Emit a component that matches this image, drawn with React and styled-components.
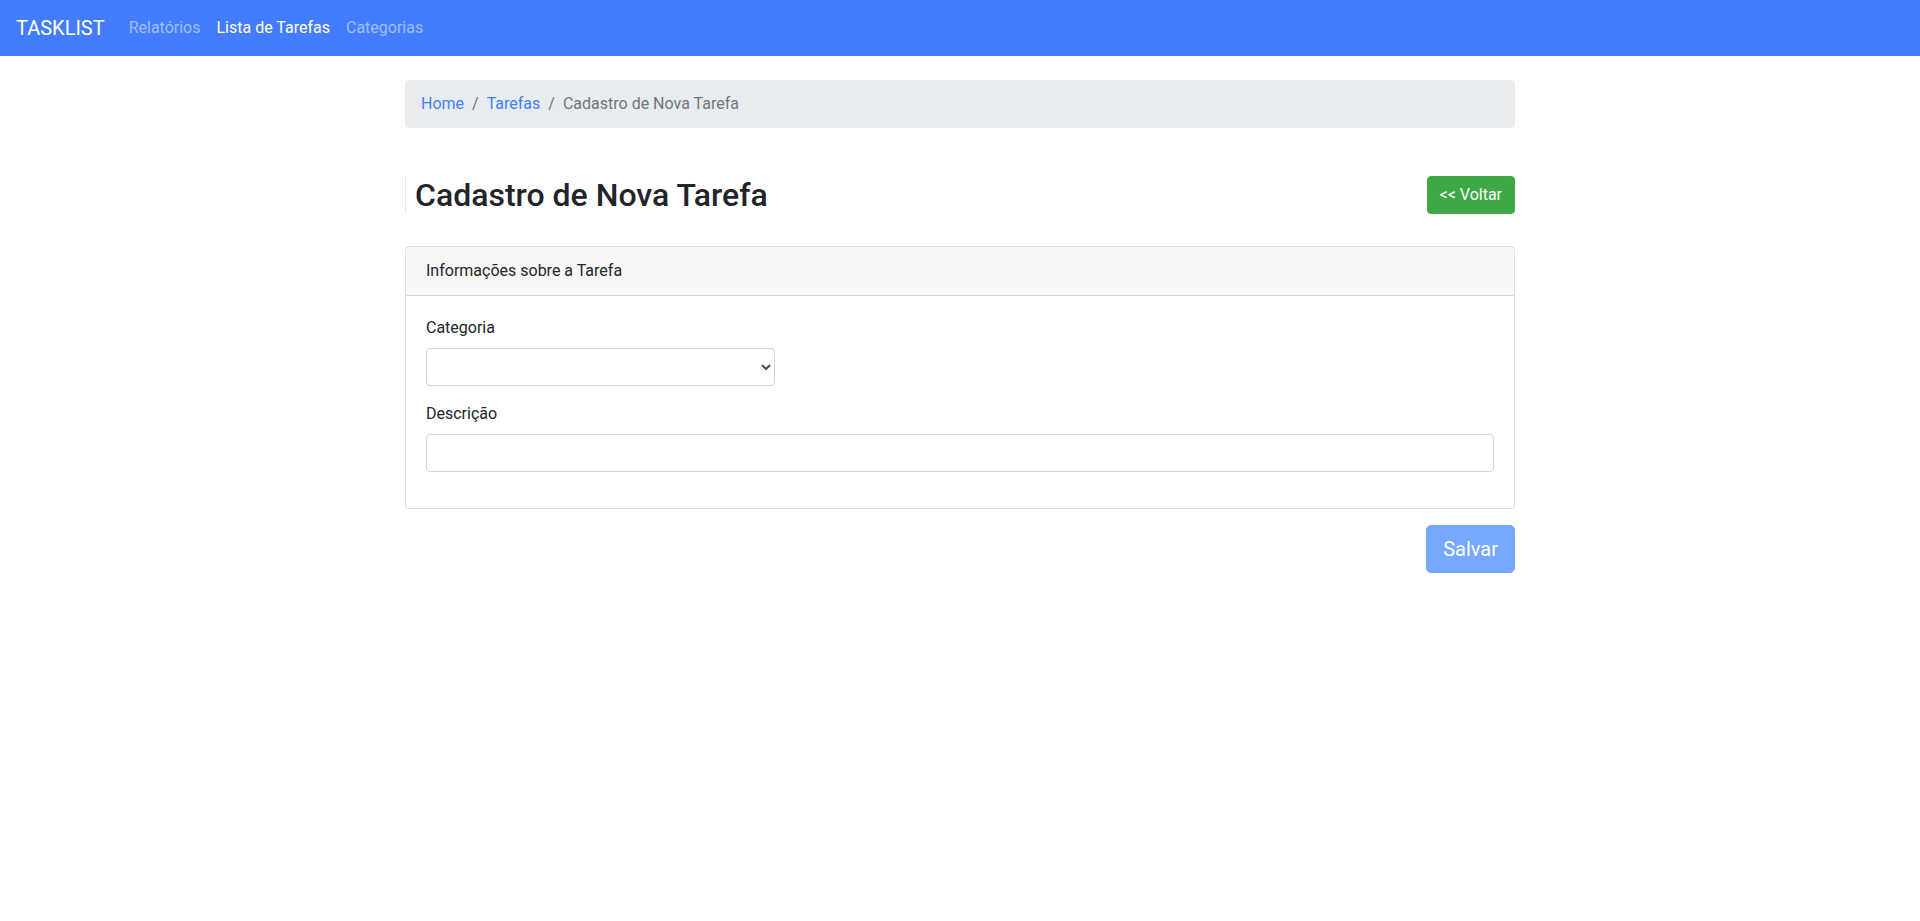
import React from "react";
import styled, { createGlobalStyle } from "styled-components";

const GlobalStyle = createGlobalStyle`
  * { box-sizing: border-box; }
  body {
    margin: 0;
    font-family: Roboto, "Liberation Sans", sans-serif;
    font-size: 16px;
    line-height: 1.5;
    color: #212529;
    background: #fff;
  }
`;

export const Navbar = styled.nav`
  display: flex;
  align-items: center;
  height: 56px;
  padding: 8px 16px;
  background-color: #427dff;
`;

export const Brand = styled.a`
  font-size: 20px;
  line-height: 30px;
  padding: 5px 0;
  margin-right: 16px;
  color: #fff;
  text-decoration: none;
`;

export const NavLink = styled.a`
  padding: 8px;
  font-size: 16px;
  line-height: 24px;
  color: ${(props) => (props.active ? "#fff" : "rgba(255, 255, 255, 0.5)")};
  text-decoration: none;
  cursor: pointer;
`;

export const Container = styled.main`
  width: 1140px;
  margin: 24px auto 0;
  padding: 0 15px;
`;

export const Breadcrumb = styled.ol`
  display: flex;
  list-style: none;
  margin: 0 0 16px;
  padding: 12px 16px;
  background-color: #e9ecef;
  border-radius: 4px;
`;

export const Crumb = styled.li`
  color: ${(props) => (props.active ? "#6c757d" : "#4080ff")};
  &:not(:first-child)::before {
    content: "/";
    color: #6c757d;
    padding: 0 8px;
  }
`;

export const Header = styled.div`
  display: flex;
  justify-content: space-between;
  align-items: center;
  margin: 48px 0 32px;
`;

export const Title = styled.h2`
  margin: 0;
  padding-left: 9px;
  border-left: 1px solid #e3e5e8;
  font-size: 32px;
  font-weight: 500;
  line-height: 38px;
  color: #212529;
`;

export const Button = styled.button`
  font-family: inherit;
  font-size: ${(props) => (props.large ? "20px" : "16px")};
  line-height: 1.5;
  padding: ${(props) => (props.large ? "8px 16px" : "6px 12px")};
  border-radius: ${(props) => (props.large ? "5px" : "4px")};
  border: 1px solid ${(props) => props.color};
  background-color: ${(props) => props.color};
  color: #fff;
  opacity: ${(props) => (props.disabled ? 0.65 : 1)};
  cursor: pointer;
`;

export const Card = styled.section`
  border: 1px solid rgba(0, 0, 0, 0.125);
  border-radius: 4px;
  overflow: hidden;
`;

export const CardHeader = styled.div`
  padding: 12px 20px;
  background-color: rgba(0, 0, 0, 0.03);
  border-bottom: 1px solid rgba(0, 0, 0, 0.125);
  font-size: 16px;
  line-height: 24px;
`;

export const CardBody = styled.div`
  padding: 20px;
`;

export const FormGroup = styled.div`
  display: flex;
  flex-direction: column;
  align-items: flex-start;
  margin-bottom: 16px;
`;

export const Label = styled.label`
  margin-bottom: 8px;
  line-height: 24px;
`;

export const Input = styled.input`
  width: ${(props) => props.width || "100%"};
  height: 38px;
  padding: 6px 12px;
  font-family: inherit;
  font-size: 16px;
  color: #495057;
  border: 1px solid #ced4da;
  border-radius: 4px;
  background: #fff;
`;

export const Select = styled.select`
  width: ${(props) => props.width || "100%"};
  height: 38px;
  padding: 6px 8px;
  font-family: inherit;
  font-size: 16px;
  color: #495057;
  border: 1px solid #ced4da;
  border-radius: 4px;
  background: #fff;
`;

export const Actions = styled.div`
  display: flex;
  justify-content: flex-end;
  margin-top: 16px;
`;

export default function App() {
  return (
    <>
      <GlobalStyle />
      <Navbar>
        <Brand>TASKLIST</Brand>
        <NavLink>Relatórios</NavLink>
        <NavLink active>Lista de Tarefas</NavLink>
        <NavLink>Categorias</NavLink>
      </Navbar>
      <Container>
        <Breadcrumb>
          <Crumb>Home</Crumb>
          <Crumb>Tarefas</Crumb>
          <Crumb active>Cadastro de Nova Tarefa</Crumb>
        </Breadcrumb>
        <Header>
          <Title>Cadastro de Nova Tarefa</Title>
          <Button color="#3ea846">&lt;&lt; Voltar</Button>
        </Header>
        <Card>
          <CardHeader>Informações sobre a Tarefa</CardHeader>
          <CardBody>
            <FormGroup>
              <Label>Categoria</Label>
              <Select width="349px" defaultValue="">
                <option value=""></option>
              </Select>
            </FormGroup>
            <FormGroup>
              <Label>Descrição</Label>
              <Input type="text" />
            </FormGroup>
          </CardBody>
        </Card>
        <Actions>
          <Button large disabled color="#2f7bff">
            Salvar
          </Button>
        </Actions>
      </Container>
    </>
  );
}
